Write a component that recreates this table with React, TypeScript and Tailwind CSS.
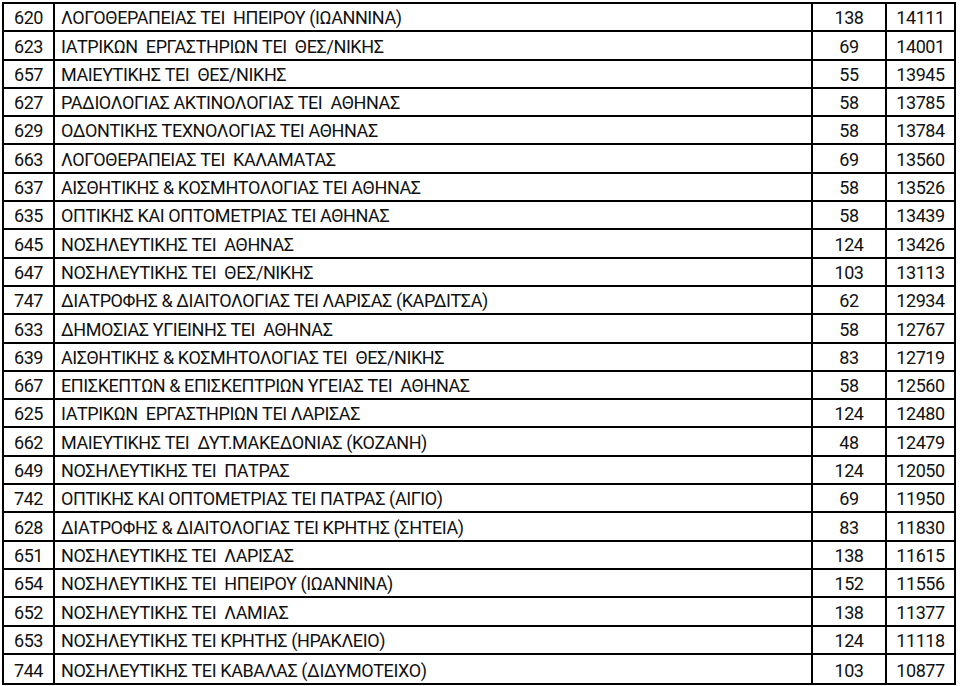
import React from "react";

const rows: [string, string, string, string][] = [
  ["620", "ΛΟΓΟΘΕΡΑΠΕΙΑΣ ΤΕΙ  ΗΠΕΙΡΟΥ (ΙΩΑΝΝΙΝΑ)", "138", "14111"],
  ["623", "ΙΑΤΡΙΚΩΝ  ΕΡΓΑΣΤΗΡΙΩΝ ΤΕΙ  ΘΕΣ/ΝΙΚΗΣ", "69", "14001"],
  ["657", "ΜΑΙΕΥΤΙΚΗΣ ΤΕΙ  ΘΕΣ/ΝΙΚΗΣ", "55", "13945"],
  ["627", "ΡΑΔΙΟΛΟΓΙΑΣ ΑΚΤΙΝΟΛΟΓΙΑΣ ΤΕΙ  ΑΘΗΝΑΣ", "58", "13785"],
  ["629", "ΟΔΟΝΤΙΚΗΣ ΤΕΧΝΟΛΟΓΙΑΣ ΤΕΙ ΑΘΗΝΑΣ", "58", "13784"],
  ["663", "ΛΟΓΟΘΕΡΑΠΕΙΑΣ ΤΕΙ  ΚΑΛΑΜΑΤΑΣ", "69", "13560"],
  ["637", "ΑΙΣΘΗΤΙΚΗΣ & ΚΟΣΜΗΤΟΛΟΓΙΑΣ ΤΕΙ ΑΘΗΝΑΣ", "58", "13526"],
  ["635", "ΟΠΤΙΚΗΣ ΚΑΙ ΟΠΤΟΜΕΤΡΙΑΣ ΤΕΙ ΑΘΗΝΑΣ", "58", "13439"],
  ["645", "ΝΟΣΗΛΕΥΤΙΚΗΣ ΤΕΙ  ΑΘΗΝΑΣ", "124", "13426"],
  ["647", "ΝΟΣΗΛΕΥΤΙΚΗΣ ΤΕΙ  ΘΕΣ/ΝΙΚΗΣ", "103", "13113"],
  ["747", "ΔΙΑΤΡΟΦΗΣ & ΔΙΑΙΤΟΛΟΓΙΑΣ ΤΕΙ ΛΑΡΙΣΑΣ (ΚΑΡΔΙΤΣΑ)", "62", "12934"],
  ["633", "ΔΗΜΟΣΙΑΣ ΥΓΙΕΙΝΗΣ ΤΕΙ  ΑΘΗΝΑΣ", "58", "12767"],
  ["639", "ΑΙΣΘΗΤΙΚΗΣ & ΚΟΣΜΗΤΟΛΟΓΙΑΣ ΤΕΙ  ΘΕΣ/ΝΙΚΗΣ", "83", "12719"],
  ["667", "ΕΠΙΣΚΕΠΤΩΝ & ΕΠΙΣΚΕΠΤΡΙΩΝ ΥΓΕΙΑΣ ΤΕΙ  ΑΘΗΝΑΣ", "58", "12560"],
  ["625", "ΙΑΤΡΙΚΩΝ  ΕΡΓΑΣΤΗΡΙΩΝ ΤΕΙ ΛΑΡΙΣΑΣ", "124", "12480"],
  ["662", "ΜΑΙΕΥΤΙΚΗΣ ΤΕΙ  ΔΥΤ.ΜΑΚΕΔΟΝΙΑΣ (ΚΟΖΑΝΗ)", "48", "12479"],
  ["649", "ΝΟΣΗΛΕΥΤΙΚΗΣ ΤΕΙ  ΠΑΤΡΑΣ", "124", "12050"],
  ["742", "ΟΠΤΙΚΗΣ ΚΑΙ ΟΠΤΟΜΕΤΡΙΑΣ ΤΕΙ ΠΑΤΡΑΣ (ΑΙΓΙΟ)", "69", "11950"],
  ["628", "ΔΙΑΤΡΟΦΗΣ & ΔΙΑΙΤΟΛΟΓΙΑΣ ΤΕΙ ΚΡΗΤΗΣ (ΣΗΤΕΙΑ)", "83", "11830"],
  ["651", "ΝΟΣΗΛΕΥΤΙΚΗΣ ΤΕΙ  ΛΑΡΙΣΑΣ", "138", "11615"],
  ["654", "ΝΟΣΗΛΕΥΤΙΚΗΣ ΤΕΙ  ΗΠΕΙΡΟΥ (ΙΩΑΝΝΙΝΑ)", "152", "11556"],
  ["652", "ΝΟΣΗΛΕΥΤΙΚΗΣ ΤΕΙ  ΛΑΜΙΑΣ", "138", "11377"],
  ["653", "ΝΟΣΗΛΕΥΤΙΚΗΣ ΤΕΙ ΚΡΗΤΗΣ (ΗΡΑΚΛΕΙΟ)", "124", "11118"],
  ["744", "ΝΟΣΗΛΕΥΤΙΚΗΣ ΤΕΙ ΚΑΒΑΛΑΣ (ΔΙΔΥΜΟΤΕΙΧΟ)", "103", "10877"],
];

export default function App() {
  return (
    <div className="w-[960px] h-[686px] bg-white overflow-hidden pt-[2px] pl-[2px]">
      <div
        className="w-[954px] border-2 border-black text-[18px] text-[#111] tracking-[-0.4px]"
        style={{ fontFamily: 'Roboto, "Open Sans", sans-serif' }}
      >
        {rows.map((r, i) => (
          <div
            key={i}
            className={`grid grid-cols-[51px_758px_74px_67px] h-[28.3px] ${i < rows.length - 1 ? "border-b-2 border-black" : ""}`}
          >
            <div className="border-r-2 border-black flex items-end justify-center leading-[22px] pb-[1px]">{r[0]}</div>
            <div className="border-r-2 border-black flex items-end pl-[6px] leading-[22px] pb-[1px] whitespace-pre">{r[1]}</div>
            <div className="border-r-2 border-black flex items-end justify-center leading-[22px] pb-[1px]">{r[2]}</div>
            <div className="flex items-end justify-center leading-[22px] pb-[1px]">{r[3]}</div>
          </div>
        ))}
      </div>
    </div>
  );
}
